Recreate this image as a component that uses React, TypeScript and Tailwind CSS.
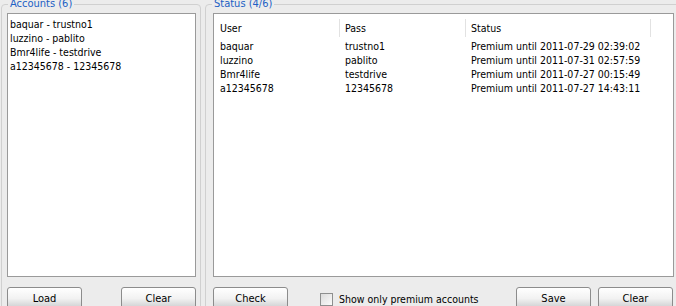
import React from "react";

const font = { fontFamily: '"DejaVu Sans Condensed", Tahoma, "Liberation Sans", sans-serif' };

function Btn({ label, className = "" }: { label: string; className?: string }) {
  return (
    <div
      className={
        "w-[75px] h-[23px] shrink-0 rounded-[3px] border border-[#8c8c8c] bg-gradient-to-b from-[#ffffff] via-[#f2f2f2] to-[#c9cbcd] flex items-center justify-center text-[11px] text-black " +
        className
      }
    >
      {label}
    </div>
  );
}

const accounts = [
  "baquar - trustno1",
  "luzzino - pablito",
  "Bmr4life - testdrive",
  "a12345678 - 12345678",
];

const rows = [
  ["baquar", "trustno1", "Premium until 2011-07-29 02:39:02"],
  ["luzzino", "pablito", "Premium until 2011-07-31 02:57:59"],
  ["Bmr4life", "testdrive", "Premium until 2011-07-27 00:15:49"],
  ["a12345678", "12345678", "Premium until 2011-07-27 14:43:11"],
];

export default function App() {
  return (
    <div
      className="w-[676px] h-[306px] overflow-hidden bg-[#ececec] flex gap-[4px] pl-[1px] text-[10.5px] leading-[14px] text-black"
      style={font}
    >
      {/* Accounts group */}
      <div className="relative mt-[4px] w-[200px] h-[330px] shrink-0 border border-[#d0d0d0] rounded-[4px] pt-[8px] pl-[5px] pr-[4px] flex flex-col">
        <span className="absolute left-[6px] top-[-8px] px-[2px] bg-[#ececec] text-[#2160c4] text-[11px] leading-[13px]">
          Accounts (6)
        </span>
        <div className="h-[264px] w-[189px] bg-white border border-[#9a9a9a] pt-[3px] pl-[2px]">
          {accounts.map((a) => (
            <div key={a} className="h-[14px]">{a}</div>
          ))}
        </div>
        <div className="mt-[10px] w-[189px] flex justify-between">
          <Btn label="Load" />
          <Btn label="Clear" />
        </div>
      </div>

      {/* Status group */}
      <div className="relative mt-[4px] w-[480px] h-[330px] shrink-0 border border-[#d0d0d0] rounded-[4px] pt-[8px] pl-[7px] flex flex-col">
        <span className="absolute left-[6px] top-[-8px] px-[2px] bg-[#ececec] text-[#2160c4] text-[11px] leading-[13px]">
          Status (4/6)
        </span>
        <div className="h-[264px] w-[461px] bg-white border border-[#9a9a9a] pt-[2px] flex flex-col">
          <div className="h-[23px] flex items-center">
            <div className="w-[125px] pl-[6px]">User</div>
            <div className="w-px h-[18px] bg-[#e2e2e2]" />
            <div className="w-[125px] pl-[5px]">Pass</div>
            <div className="w-px h-[18px] bg-[#e2e2e2]" />
            <div className="w-[184px] pl-[5px]">Status</div>
            <div className="w-px h-[18px] bg-[#e2e2e2]" />
          </div>
          {rows.map((r) => (
            <div key={r[0]} className="h-[14px] flex">
              <div className="w-[126px] pl-[6px]">{r[0]}</div>
              <div className="w-[126px] pl-[5px]">{r[1]}</div>
              <div className="w-[185px] pl-[5px] whitespace-nowrap">{r[2]}</div>
            </div>
          ))}
        </div>
        <div className="mt-[10px] w-[460px] flex items-start">
          <Btn label="Check" />
          <div className="ml-[32px] mt-[5px] flex items-center gap-[6px]">
            <div className="w-[13px] h-[13px] border border-[#8e8f8f] bg-gradient-to-br from-[#dcdcdc] to-[#fbfbfb]" />
            <span className="text-[10.5px]">Show only premium accounts</span>
          </div>
          <Btn label="Save" className="ml-auto" />
          <Btn label="Clear" className="ml-[7px]" />
        </div>
      </div>
    </div>
  );
}
